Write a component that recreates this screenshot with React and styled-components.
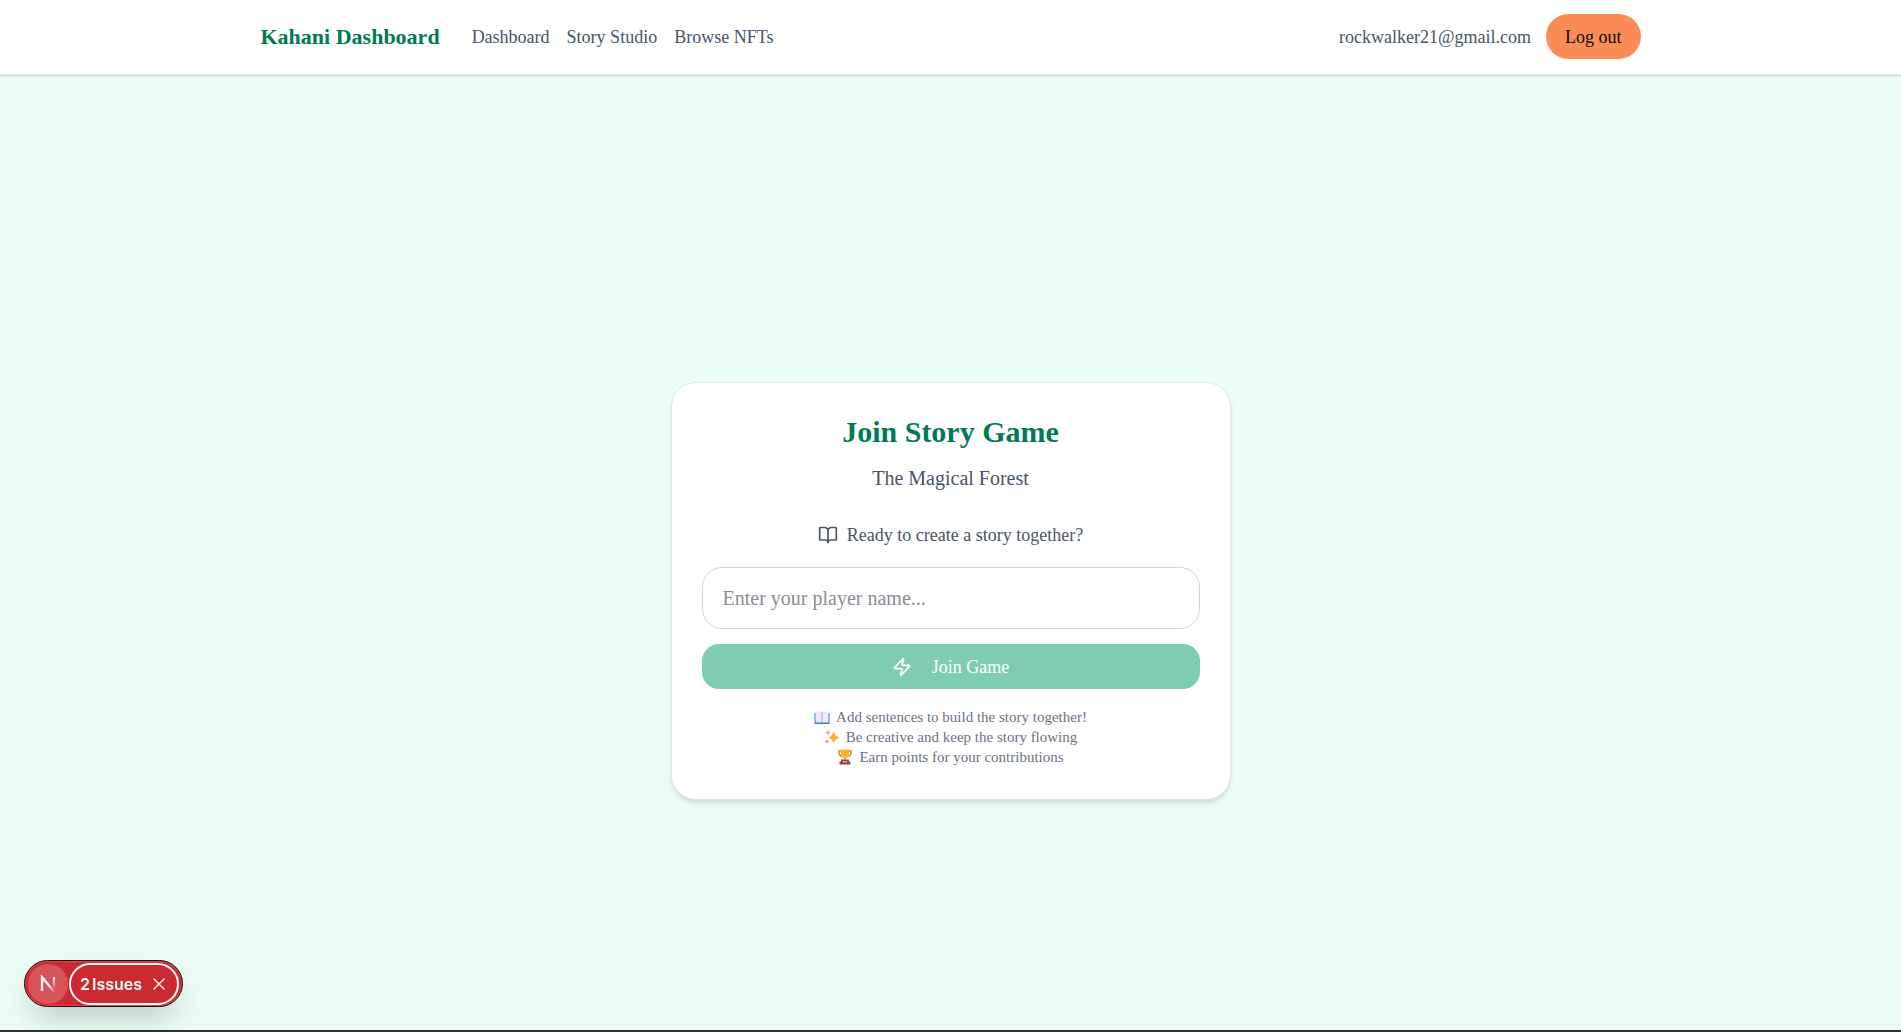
import React, { useState } from "react";
import styled, { createGlobalStyle } from "styled-components";
import { BookOpen, Zap } from "lucide-react";

const serif = `"Liberation Serif", "Times New Roman", serif`;
const sans = `Inter, "Liberation Sans", sans-serif`;

const GlobalStyle = createGlobalStyle`
  *, *::before, *::after { box-sizing: border-box; }
  body { margin: 0; background: #ebfdf5; font-family: ${serif}; }
  button, input { font: inherit; margin: 0; }
  h1, p, ul { margin: 0; padding: 0; }
`;

const Page = styled.div`
  display: flex;
  flex-direction: column;
  height: 100vh;
  overflow: hidden;
  border-bottom: 2px solid #2b3336;
  background: #ebfdf5;
`;

const Header = styled.header`
  flex: none;
  padding: 14px 16px 15px;
  background: #fffffd;
  border-bottom: 1px solid #d0fae5;
  box-shadow: 0 1px 3px rgba(0, 0, 0, 0.1), 0 1px 2px rgba(0, 0, 0, 0.1);
  z-index: 1;
`;

const HeaderInner = styled.div`
  display: flex;
  align-items: center;
  justify-content: space-between;
  max-width: 1380px;
  margin: 0 auto;
`;

const HeaderGroup = styled.div`
  display: flex;
  align-items: center;
  gap: ${(p) => p.$gap}px;
`;

const Brand = styled.a`
  color: #007a55;
  font-size: 22px;
  font-weight: 700;
  line-height: 30px;
  text-decoration: none;
`;

const Nav = styled.nav`
  display: flex;
  gap: 17px;
`;

const NavLink = styled.a`
  color: #45556c;
  font-size: 18px;
  line-height: 24px;
  text-decoration: none;
`;

const Email = styled.span`
  color: #45556c;
  font-size: 18px;
  line-height: 24px;
`;

const LogoutButton = styled.button`
  height: 45px;
  padding: 0 19px;
  border: 0;
  border-radius: 24px;
  background: #fb8c58;
  color: #0a0a0a;
  font-size: 18px;
  line-height: 24px;
  cursor: pointer;
`;

const Main = styled.main`
  display: flex;
  flex: 0 0 100vh;
  align-items: center;
  justify-content: center;
  padding: 16px;
`;

const Card = styled.section`
  display: flex;
  flex-direction: column;
  align-items: center;
  width: 100%;
  max-width: 560px;
  padding: 30px 30px 32px;
  border: 1px solid #e5e5e5;
  border-radius: 25px;
  background: #fff;
  box-shadow: 0 4px 6px -1px rgba(0, 0, 0, 0.1), 0 2px 4px -2px rgba(0, 0, 0, 0.1);
`;

const Title = styled.h1`
  color: #007a55;
  font-size: 30px;
  line-height: 38px;
`;

const Subtitle = styled.p`
  margin-top: 12px;
  color: #4a5565;
  font-size: 20px;
  line-height: 30px;
`;

const Prompt = styled.label`
  display: flex;
  align-items: center;
  gap: 9px;
  margin-top: 30px;
  color: #4a5565;
  font-size: 18px;
  line-height: 24px;
`;

const Form = styled.form`
  display: flex;
  flex-direction: column;
  gap: 15px;
  width: 100%;
  margin-top: 20px;
`;

const NameInput = styled.input`
  width: 100%;
  height: 62px;
  padding: 0 20px;
  border: 1px solid #d4d4d4;
  border-radius: 20px;
  background: #fff;
  color: #1e2939;
  font-size: 20px;
  line-height: 30px;
  outline: none;
  &::placeholder { color: #8b8d93; opacity: 1; }
`;

const JoinButton = styled.button`
  display: flex;
  align-items: center;
  justify-content: center;
  gap: 20px;
  height: 45px;
  padding: 0;
  border: 0;
  border-radius: 17px;
  background: #80ccb2;
  color: #fff;
  font-size: 18px;
  font-weight: 500;
  line-height: 24px;
`;

const Tips = styled.ul`
  margin-top: 18px;
  list-style: none;
  color: #6a7282;
  font-size: 15px;
  line-height: 20px;
`;

const Tip = styled.li`
  display: flex;
  align-items: center;
  justify-content: center;
  gap: 6px;
`;

const DevBadge = styled.aside`
  position: fixed;
  left: 24px;
  bottom: 25px;
  z-index: 5;
  display: flex;
  align-items: center;
  gap: 1px;
  height: 47px;
  padding: 3px;
  border: 1px solid #1b1013;
  border-radius: 24px;
  background: #ca2a30;
  box-shadow: inset 0 0 0 1px #e0474d, 0 16px 32px -8px rgba(0, 0, 0, 0.24);
  color: #fff;
  font-family: ${sans};
`;

const LogoButton = styled.button`
  display: grid;
  place-items: center;
  width: 40px;
  height: 40px;
  padding: 0;
  border: 0;
  border-radius: 50%;
  background: #d7555a;
`;

const IssuesGroup = styled.div`
  display: flex;
  align-items: center;
  height: 42px;
  padding: 0 12px 0 9px;
  gap: 11px;
  border: 2px solid #fff;
  border-radius: 21px;
`;

const PlainButton = styled.button`
  display: flex;
  align-items: center;
  gap: 2px;
  padding: 0;
  border: 0;
  background: none;
  color: #fff;
  font-size: 16px;
  font-weight: 600;
  line-height: 20px;
`;

function BookEmoji() {
  return (
    <svg width="16" height="16" viewBox="0 0 32 32" aria-hidden="true">
      <path d="M1 8h30v22H18l-2 1-2-1H1z" fill="#2f86d6" />
      <path d="M3 5h11q2 0 2 2 0-2 2-2h11v22H18q-2 0-2 2 0-2-2-2H3z" fill="#efe8fb" />
      <path d="M16 7v21" stroke="#a99bc4" strokeWidth="2" />
    </svg>
  );
}

function SparklesEmoji() {
  return (
    <svg width="16" height="16" viewBox="0 0 32 32" aria-hidden="true">
      <path d="M19 4q2 10 12 13-10 3-12 12-2-9-11-12Q17 14 19 4z" fill="#fbb040" />
      <path d="M8 1q1 5 5 6-4 1-5 6-1-5-5-6 4-1 5-6zM6 20q1 4 5 5-4 1-5 5-1-4-5-5 4-1 5-5z" fill="#f79a6b" />
    </svg>
  );
}

function TrophyEmoji() {
  return (
    <svg width="16" height="16" viewBox="0 0 32 32" aria-hidden="true">
      <path d="M8 4H4v4q0 6 8 7M24 4h4v4q0 6-8 7" fill="none" stroke="#e8892b" strokeWidth="3" />
      <path d="M8 1h16v8q0 8-6 9v4h-4v-4q-6-1-6-9z" fill="#fbb52f" />
      <path d="M8 21h16v4h3v6H5v-6h3z" fill="#8d4658" />
      <path d="M12 24h8v3h-8z" fill="#f3b04a" />
    </svg>
  );
}

function NextMark() {
  return (
    <svg width="18" height="18" viewBox="0 0 18 18" fill="none" aria-hidden="true">
      <defs>
        <linearGradient id="markDiagonal" x1="10" y1="10" x2="16" y2="18" gradientUnits="userSpaceOnUse">
          <stop stopColor="#fff" />
          <stop offset="1" stopColor="#fff" stopOpacity="0" />
        </linearGradient>
        <linearGradient id="markStem" x1="15" y1="2" x2="15" y2="14" gradientUnits="userSpaceOnUse">
          <stop stopColor="#fff" />
          <stop offset="1" stopColor="#fff" stopOpacity="0" />
        </linearGradient>
      </defs>
      <path d="M3 16V2L16 18" stroke="url(#markDiagonal)" strokeWidth="2.200" />
      <path d="M15 2v12" stroke="url(#markStem)" strokeWidth="2" />
    </svg>
  );
}

function CloseMark() {
  return (
    <svg width="12" height="12" viewBox="0 0 12 12" aria-hidden="true">
      <path d="M1 1l10 10M11 1L1 11" stroke="#fff" strokeWidth="1.300" strokeLinecap="round" />
    </svg>
  );
}

const links = ["Dashboard", "Story Studio", "Browse NFTs"];

const tips = [
  { Icon: BookEmoji, text: "Add sentences to build the story together!" },
  { Icon: SparklesEmoji, text: "Be creative and keep the story flowing" },
  { Icon: TrophyEmoji, text: "Earn points for your contributions" },
];

export default function App() {
  const [name, setName] = useState("");

  return (
    <>
      <GlobalStyle />
      <Page>
        <Header>
          <HeaderInner>
            <HeaderGroup $gap={32}>
              <Brand href="#">Kahani Dashboard</Brand>
              <Nav>
                {links.map((label) => (
                  <NavLink key={label} href="#">{label}</NavLink>
                ))}
              </Nav>
            </HeaderGroup>
            <HeaderGroup $gap={15}>
              <Email>rockwalker21@gmail.com</Email>
              <LogoutButton type="button">Log out</LogoutButton>
            </HeaderGroup>
          </HeaderInner>
        </Header>
        <Main>
          <Card>
            <Title>Join Story Game</Title>
            <Subtitle>The Magical Forest</Subtitle>
            <Prompt htmlFor="player-name">
              <BookOpen size={20} />
              Ready to create a story together?
            </Prompt>
            <Form onSubmit={(e) => e.preventDefault()}>
              <NameInput
                id="player-name"
                value={name}
                onChange={(e) => setName(e.target.value)}
                placeholder="Enter your player name..."
              />
              <JoinButton type="submit" disabled={!name}>
                <Zap size={20} />
                Join Game
              </JoinButton>
            </Form>
            <Tips>
              {tips.map(({ Icon, text }) => (
                <Tip key={text}>
                  <Icon />
                  {text}
                </Tip>
              ))}
            </Tips>
          </Card>
        </Main>
      </Page>
      <DevBadge>
        <LogoButton type="button" aria-label="Open developer tools">
          <NextMark />
        </LogoButton>
        <IssuesGroup>
          <PlainButton type="button">
            <span>2</span> <span>Issues</span>
          </PlainButton>
          <PlainButton type="button" aria-label="Collapse issues">
            <CloseMark />
          </PlainButton>
        </IssuesGroup>
      </DevBadge>
    </>
  );
}
